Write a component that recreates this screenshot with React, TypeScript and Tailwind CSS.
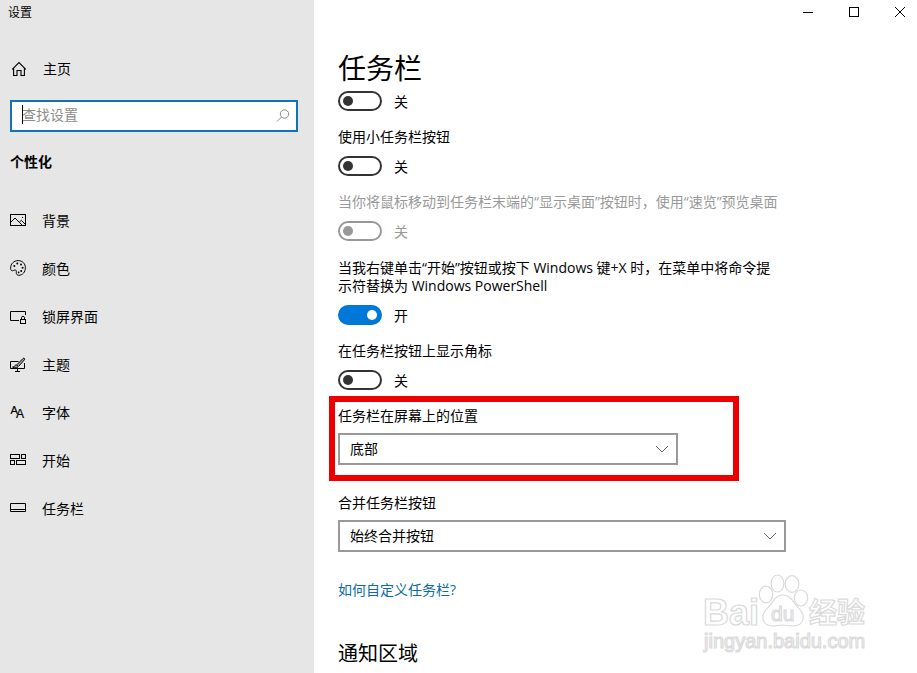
import { useState } from 'react';
import type { ReactNode } from 'react';

const HomeIcon = () => (
  <svg className="h-4 w-4" viewBox="0 0 16 16" fill="none" stroke="currentColor" strokeWidth="1.1">
    <path d="M1.2 8.3 8 1.5l6.8 6.8M2.6 7v7.5H6V9.5h4v5h3.4V7" />
  </svg>
);

const PictureIcon = () => (
  <svg className="h-4 w-4" viewBox="0 0 16 16" fill="none" stroke="currentColor">
    <rect x="0.5" y="1.5" width="15" height="11" />
    <path d="M1 9 5 5l7.3 7.3M9.4 9.2l1.9-1.9 4 4" />
    <path d="M12 4.5h1" />
  </svg>
);

const PaletteIcon = () => (
  <svg className="h-4 w-4 overflow-visible" viewBox="0 1 16 16" fill="none" stroke="currentColor">
    <path d="M.6 8.3C.5 3.8 3.9.6 8.2.6c4.2 0 7.2 3.1 7.2 7.2 0 4.3-3 7.5-6.6 7.5-1.8 0-2.7-1.2-2.5-2.9.2-1.5-.2-2.5-1.3-2.5-1 0-1.5.9-2.6.9C1.2 10.8.6 9.700.6 8.3Z" />
    <g fill="currentColor" stroke="none">
      <circle cx="4.3" cy="6" r="1" />
      <circle cx="7.3" cy="3.6" r="1" />
      <circle cx="11" cy="4.6" r="1" />
      <circle cx="12.6" cy="7.8" r="1" />
      <circle cx="11.2" cy="11" r="1" />
      <circle cx="8.6" cy="12.4" r="0.9" />
    </g>
  </svg>
);

const LockScreenIcon = () => (
  <svg className="h-4 w-4" viewBox="0 0 16 16" fill="none" stroke="currentColor">
    <path d="M9 11.5H.5v-9h15V6" />
    <rect x="10.5" y="10.5" width="5" height="4" />
    <path d="M11.5 10.500V8.800a1.500 1.500 0 0 1 3 0v1.700" />
  </svg>
);

const ThemeIcon = () => (
  <svg className="h-4 w-4" viewBox="0 0 16 16" fill="none" stroke="currentColor">
    <path d="M8.5 4.500H.5v7h14V6M7.500 12v2.500M5 14.500h5" />
    <path d="M7 7.600 13 1.500c.9-.9 2.300.300 1.400 1.300L8.800 9.200" fill="currentColor" fillOpacity="0.3" />
    <path d="M2.5 10c1.500.2 1.900-.5 2.300-1.300.8-1.300 3-.8 3.200.7C8.100 11 5 11.500 2.500 10Z" fill="currentColor" fillOpacity="0.3" />
  </svg>
);

const FontIcon = () => (
  <svg
    className="h-4 w-4 overflow-visible"
    viewBox="0 0 16 16"
    fill="currentColor"
    stroke="currentColor"
    strokeWidth="0.2"
    fontFamily="'Liberation Sans', sans-serif"
  >
    <text x="0.5" y="9" fontSize="11">A</text>
    <text x="6" y="13" fontSize="12">A</text>
  </svg>
);

const StartIcon = () => (
  <svg className="h-4 w-4" viewBox="0 0 16 16" fill="none" stroke="currentColor">
    <rect x="0.5" y="1.5" width="9" height="4" />
    <rect x="11.5" y="1.5" width="4" height="4" />
    <rect x="0.5" y="7.5" width="4" height="4" />
    <rect x="6.5" y="7.5" width="9" height="4" />
  </svg>
);

const TaskbarIcon = () => (
  <svg className="h-4 w-4" viewBox="0 0 16 16" fill="none" stroke="currentColor">
    <path d="M.5 2.5h15v8H.5zM.5 8.5h15" />
  </svg>
);

const navigation = [
  { name: '背景', icon: <PictureIcon /> },
  { name: '颜色', icon: <PaletteIcon /> },
  { name: '锁屏界面', icon: <LockScreenIcon /> },
  { name: '主题', icon: <ThemeIcon /> },
  { name: '字体', icon: <FontIcon /> },
  { name: '开始', icon: <StartIcon /> },
  { name: '任务栏', icon: <TaskbarIcon /> },
];

const Sidebar = () => (
  <aside className="w-[314px] shrink-0 bg-[#e6e6e6]">
    <div className="flex h-[26px] items-center px-2 text-xs">设置</div>

    <a href="#home" className="mt-[19px] flex h-12 items-center gap-4 px-[11px]">
      <HomeIcon />
      <span>主页</span>
    </a>

    {/* Search */}
    <div className="relative mx-[10px] mt-[7px] w-72">
      <input
        type="text"
        aria-label="查找设置"
        placeholder="查找设置"
        className="block h-8 w-full border-2 border-[#1272b6] bg-white pl-[10px] pr-8 pb-1 text-sm outline-none placeholder:text-[#8c8c8c]"
      />
      <span className="absolute left-3 top-[5px] h-[19px] w-px bg-black"></span>
      <svg
        className="absolute right-2 top-2 h-4 w-4 text-[#8a8a8a]"
        viewBox="0 0 16 16"
        fill="none"
        stroke="currentColor"
      >
        <circle cx="10.5" cy="6" r="4.2" />
        <path d="M7.5 9 3 13.5" />
      </svg>
    </div>

    <h2 className="mt-[21px] px-[10px] leading-[18px] font-bold">个性化</h2>

    <nav className="mt-[26px]">
      {navigation.map((item) => (
        <a key={item.name} href="#" className="flex h-12 items-center gap-4 px-[10px]">
          {item.icon}
          <span>{item.name}</span>
        </a>
      ))}
    </nav>
  </aside>
);

const WindowControls = () => (
  <div className="flex h-6 justify-end">
    <button aria-label="最小化" className="flex w-[46px] items-center justify-center">
      <svg className="h-[10px] w-[10px]" viewBox="0 0 10 10" fill="none" stroke="currentColor">
        <path d="M0 5.5h10" />
      </svg>
    </button>
    <button aria-label="最大化" className="flex w-[46px] items-center justify-center">
      <svg className="h-[10px] w-[10px]" viewBox="0 0 10 10" fill="none" stroke="currentColor">
        <rect x="0.5" y="0.5" width="9" height="9" />
      </svg>
    </button>
    <button aria-label="关闭" className="flex w-10 items-center justify-center pl-[6px]">
      <svg className="h-[10px] w-[10px]" viewBox="0 0 10 10" fill="none" stroke="currentColor">
        <path d="m0 0 10 10M10 0 0 10" />
      </svg>
    </button>
  </div>
);

type ToggleProps = {
  id: string;
  label?: string;
  defaultOn?: boolean;
  disabled?: boolean;
};

const Toggle = ({ id, label, defaultOn = false, disabled = false }: ToggleProps) => {
  const [on, setOn] = useState(defaultOn);

  return (
    <div className={disabled ? 'text-[#999999]' : ''}>
      {label && (
        <label htmlFor={id} className="mb-[10px] block leading-[18px]">
          {label}
        </label>
      )}
      <div className="flex h-5 items-center gap-3">
        <input
          id={id}
          type="checkbox"
          role="switch"
          aria-label={label ?? '任务栏开关'}
          checked={on}
          disabled={disabled}
          onChange={() => setOn(!on)}
          className="flex h-5 w-11 shrink-0 appearance-none items-center rounded-full border-2 border-[#333333] px-[3px] before:h-[10px] before:w-[10px] before:rounded-full before:bg-[#333333] checked:justify-end checked:border-[#0078d7] checked:bg-[#0078d7] checked:before:bg-white disabled:border-[#999999] disabled:before:bg-[#999999]"
        />
        <span className="pt-0.5">{on ? '开' : '关'}</span>
      </div>
    </div>
  );
};

type DropdownProps = {
  id: string;
  label: string;
  options: string[];
  width: string;
  children?: ReactNode;
};

const Dropdown = ({ id, label, options, width, children }: DropdownProps) => (
  <div className="relative">
    <label htmlFor={id} className="mb-2 block leading-[18px]">
      {label}
    </label>
    <div className={`relative ${width}`}>
      <select
        id={id}
        className="block h-8 w-full appearance-none border-2 border-[#999999] bg-white pl-[10px] pr-8 text-sm outline-none"
      >
        {options.map((option) => (
          <option key={option}>{option}</option>
        ))}
      </select>
      <svg
        className="pointer-events-none absolute right-[10px] top-[10px] h-3 w-3 text-[#666666]"
        viewBox="0 0 12 12"
        fill="none"
        stroke="currentColor"
      >
        <path d="m0 3 6 6 6-6" />
      </svg>
    </div>
    {children}
  </div>
);

const Watermark = () => (
  <svg
    className="pointer-events-none absolute right-[42px] bottom-[11px] h-[90px] w-[175px]"
    viewBox="0 0 175 90"
    fill="#ffffff"
    stroke="#dadada"
    strokeWidth="1.2"
    fontFamily="'Liberation Sans', 'Noto Sans CJK SC', sans-serif"
  >
    <text x="3" y="53" fontSize="36" fontWeight="700">Bai</text>
    <text x="109" y="51" fontSize="28" fontWeight="700">经验</text>
    <ellipse cx="77.5" cy="11.5" rx="6.4" ry="8.5" />
    <ellipse cx="92" cy="12" rx="6.8" ry="8.3" />
    <ellipse cx="66" cy="22.5" rx="6.7" ry="8.3" />
    <ellipse cx="101" cy="26" rx="6.7" ry="8" />
    <path d="M83 23c7 0 9 5 12 9 4 5 9 8 8 15-1 5-5 7-10 7-4 0-6-1-10-1s-6 1-10 1c-5 0-9-2-10-7-1-7 4-10 8-15 3-4 5-9 12-9Z" />
    <text x="71" y="49" fontSize="21">du</text>
    <text x="4" y="76" fontSize="20">jingyan.baidu.com</text>
  </svg>
);

const App = () => {
  return (
    <div className="flex min-h-screen bg-white font-['Open_Sans','Noto_Sans_CJK_SC',sans-serif] text-sm text-black">
      <Sidebar />

      <main className="relative min-w-0 flex-1">
        <WindowControls />

        <div className="px-6">
          <h1 className="mt-[26px] text-[28px] leading-9">任务栏</h1>

          <div className="mt-[5px] flex flex-col gap-[17px]">
            <Toggle id="auto-hide" />
            <Toggle id="small-buttons" label="使用小任务栏按钮" />
            <Toggle
              id="peek"
              label="当你将鼠标移动到任务栏末端的“显示桌面”按钮时，使用“速览”预览桌面"
              disabled
            />
          </div>

          <div className="mt-[18px] flex max-w-[440px] flex-col gap-[17px]">
            <Toggle
              id="powershell"
              label="当我右键单击“开始”按钮或按下 Windows 键+X 时，在菜单中将命令提示符替换为 Windows PowerShell"
              defaultOn
            />
            <Toggle id="badges" label="在任务栏按钮上显示角标" />

            <Dropdown
              id="position"
              label="任务栏在屏幕上的位置"
              options={['底部', '靠左', '顶部', '靠右']}
              width="w-[340px]"
            >
              {/* Highlight frame */}
              <div className="pointer-events-none absolute -top-[11px] -bottom-4 -left-[9px] w-[410px] border-6 border-[#ee0000]"></div>
            </Dropdown>
          </div>

          <div className="mt-[29px]">
            <Dropdown
              id="combine"
              label="合并任务栏按钮"
              options={['始终合并按钮', '任务栏已满时', '从不']}
              width="max-w-[448px]"
            />
          </div>

          <a href="#help" className="mt-[29px] block leading-[18px] text-[#0a6ca8]">
            如何自定义任务栏?
          </a>

          <h2 className="mt-[41px] text-xl leading-7">通知区域</h2>
        </div>

        <Watermark />
      </main>
    </div>
  );
};

export default App;
